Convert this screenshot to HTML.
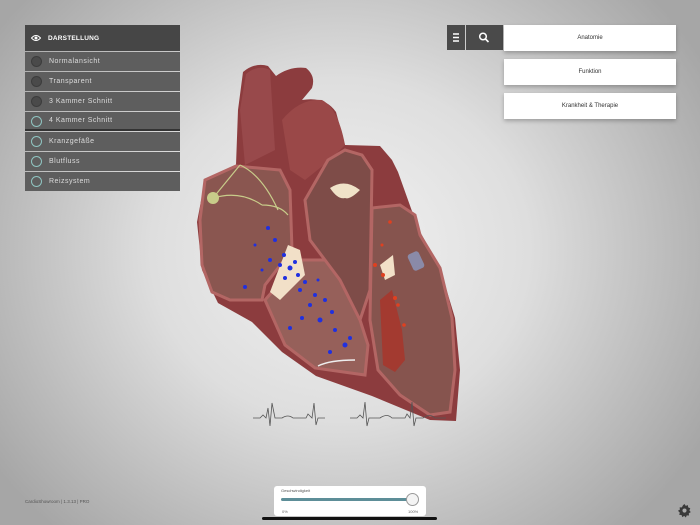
<!DOCTYPE html>
<html><head><meta charset="utf-8"><style>
*{margin:0;padding:0;box-sizing:border-box}
body{width:700px;height:525px;overflow:hidden;position:relative;font-family:"Liberation Sans",sans-serif;background:radial-gradient(ellipse 420px 380px at 340px 250px,#f2f2f2 0%,#dedede 45%,#bababa 80%,#a6a6a6 100%)}
.menu{position:absolute;left:25px;top:25px;width:155px}
.hd{height:26px;background:#464646;color:#fff;font-size:6.5px;font-weight:bold;display:flex;align-items:center;padding-left:23px;letter-spacing:.2px;position:relative}
.it{height:19px;margin-top:1px;background:#5e5e5e;color:#ddd;font-size:7px;display:flex;align-items:center;padding-left:24px;letter-spacing:.5px;position:relative}
.it:before{content:"";position:absolute;left:6px;top:4px;width:9px;height:9px;border-radius:50%;border:1.3px solid #3c3c3c;background:#4a4a4a}
.it.on:before{border-color:#8fc4c0;background:transparent}
.btn{position:absolute;background:#fff;font-size:6px;color:#333;display:flex;align-items:center;justify-content:center;box-shadow:0 2px 4px rgba(0,0,0,.25)}
.ib{position:absolute;top:25px;height:25px;background:#4a4a4a;color:#fff}
</style></head><body>
<div class="menu">
<div class="hd"><svg style="position:absolute;left:6px;top:9px" width="10" height="8" viewBox="0 0 10 8"><path d="M0.5 4Q5 -1 9.5 4Q5 9 0.5 4Z" fill="none" stroke="#fff" stroke-width="1"/><circle cx="5" cy="4" r="1.5" fill="#fff"/></svg>DARSTELLUNG</div>
<div class="it">Normalansicht</div>
<div class="it">Transparent</div>
<div class="it">3 Kammer Schnitt</div>
<div class="it on" style="border-bottom:2px solid #333">4 Kammer Schnitt</div>
<div class="it on">Kranzgefäße</div>
<div class="it on">Blutfluss</div>
<div class="it on">Reizsystem</div>
</div>
<div class="ib" style="left:447px;width:18px"><svg width="18" height="25"><path d="M6 9h6M6 12.5h6M6 16h6" stroke="#fff" stroke-width="1.6"/></svg></div>
<div class="ib" style="left:466px;width:37px"><svg width="37" height="25"><circle cx="17" cy="11.5" r="3.3" fill="none" stroke="#fff" stroke-width="1.5"/><path d="M19.5 14l3 3" stroke="#fff" stroke-width="1.6"/></svg></div>
<div class="btn" style="left:504px;top:25px;width:172px;height:26px">Anatomie</div>
<div class="btn" style="left:504px;top:59px;width:172px;height:26px">Funktion</div>
<div class="btn" style="left:504px;top:93px;width:172px;height:26px">Krankheit &amp; Therapie</div>

<svg style="position:absolute;left:0;top:0" width="700" height="525">
<path d="M243 72 Q255 62 268 66 L276 76 Q290 66 306 68 Q316 76 312 88 L302 100 Q325 96 336 112 L345 145 L380 146 L392 160 L398 172 L408 200 L418 228 L440 268 L455 318 L460 370 L456 421 L430 420 L372 396 L316 376 L282 352 L252 322 L218 303 L202 270 L197 222 L205 180 L236 165 L238 110 Z" fill="#8c3c3e"/>
<path d="M282 120 Q300 98 322 100 Q338 108 345 145 L330 160 L305 180 L290 170 Z" fill="#9a4848"/>
<path d="M246 74 Q258 64 270 70 L275 150 L245 165 L240 110 Z" fill="#98494b"/>
<path d="M205 180 L236 166 L280 170 L290 190 L292 250 L265 285 L262 300 L230 300 L212 292 L202 265 L200 220 Z" fill="#8a5650" stroke="#b36664" stroke-width="3"/>
<path d="M265 300 L300 260 L330 260 L345 290 L360 320 L368 345 L365 375 L315 368 L285 345 Z" fill="#96605a" stroke="#b36664" stroke-width="3"/>
<path d="M328 160 L345 150 L362 155 L372 170 L370 290 L360 320 L340 280 L310 240 L305 200 Z" fill="#7e4c48" stroke="#b36664" stroke-width="3"/>
<path d="M372 208 L400 205 L415 215 L420 235 L440 268 L452 318 L455 370 L450 412 L430 415 L400 395 L378 370 L370 320 Z" fill="#86544e" stroke="#b36664" stroke-width="3"/>
<path d="M380 300 L392 290 L402 330 L405 360 L395 372 L383 365 Z" fill="#a33a30"/>
<path d="M330 188 Q345 178 360 190 Q350 200 345 198 Q338 200 330 188Z" fill="#f0e2c8"/>
<path d="M288 245 L300 250 L305 275 L280 300 L270 292 Z" fill="#f2e0c8"/>
<path d="M380 265 L393 255 L395 275 L385 280 Z" fill="#f2e0c8"/>
<circle cx="213" cy="198" r="6" fill="#c8cc8a"/>
<path d="M213 198 Q240 190 262 205 M213 198 L240 165 M240 165 Q262 175 278 210 M262 205 Q280 205 288 215" stroke="#c8cc8a" stroke-width="1.2" fill="none"/>
<rect x="410" y="252" width="12" height="18" rx="3" fill="#8a8aa8" transform="rotate(-25 416 261)"/>
<g fill="#2030e0">
<circle cx="268" cy="228" r="2"/><circle cx="275" cy="240" r="2"/><circle cx="284" cy="255" r="2"/><circle cx="270" cy="260" r="2"/><circle cx="290" cy="268" r="2.5"/><circle cx="298" cy="275" r="2"/><circle cx="285" cy="278" r="2"/><circle cx="305" cy="282" r="2"/><circle cx="245" cy="287" r="2"/><circle cx="300" cy="290" r="2"/><circle cx="315" cy="295" r="2"/><circle cx="310" cy="305" r="2"/><circle cx="325" cy="300" r="2"/><circle cx="302" cy="318" r="2"/><circle cx="290" cy="328" r="2"/><circle cx="320" cy="320" r="2.5"/><circle cx="335" cy="330" r="2"/><circle cx="345" cy="345" r="2.5"/><circle cx="330" cy="352" r="2"/><circle cx="350" cy="338" r="2"/><circle cx="332" cy="312" r="2"/><circle cx="255" cy="245" r="1.5"/><circle cx="262" cy="270" r="1.5"/><circle cx="280" cy="265" r="2"/><circle cx="295" cy="262" r="2"/><circle cx="318" cy="280" r="1.5"/>
</g>
<g fill="#e04020">
<circle cx="390" cy="222" r="1.8"/><circle cx="375" cy="265" r="2"/><circle cx="383" cy="275" r="2"/><circle cx="395" cy="298" r="2"/><circle cx="398" cy="305" r="1.8"/><circle cx="404" cy="325" r="1.8"/><circle cx="382" cy="245" r="1.5"/>
</g>
<path d="M318 366 Q330 360 355 360" stroke="#eee" stroke-width="1.5" fill="none"/>
<g stroke="#555" stroke-width="0.8" fill="none">
<path d="M253 418 L260 418 L263 415 L266 418 L268 408 L270 426 L272 403 L275 418 L282 418 Q288 414 293 418 L306 418 L308 414 L312 418 L314 403 L316 425 L318 418 L325 418"/>
<path d="M350 418 L357 418 L360 415 L363 418 L365 402 L367 426 L369 418 L380 418 Q387 413 392 418 L405 418 L407 414 L410 418 L412 402 L414 426 L416 418 L423 418 Q430 413 435 418 L446 418"/>
</g>
</svg>

<div style="position:absolute;left:25px;top:499px;font-size:4.5px;color:#555">CardioShowroom | 1.3.13 | PRO</div>
<div style="position:absolute;left:274px;top:486px;width:152px;height:30px;background:#fff;border-radius:3px">
<div style="position:absolute;left:7px;top:2px;font-size:4px;color:#555">Geschwindigkeit</div>
<div style="position:absolute;left:7px;top:12px;width:135px;height:3px;background:#5d8e98;border-radius:2px"></div>
<div style="position:absolute;left:132px;top:7px;width:13px;height:13px;border-radius:50%;background:#f4f4f4;border:1px solid #999"></div>
<div style="position:absolute;left:8px;top:23px;font-size:4px;color:#666">0%</div>
<div style="position:absolute;left:134px;top:23px;font-size:4px;color:#666">100%</div>
</div>
<div style="position:absolute;left:262px;top:517px;width:175px;height:3px;background:#111;border-radius:2px"></div>
<svg style="position:absolute;left:677px;top:503px" width="15" height="15" viewBox="0 0 16 16"><path d="M8 1l1.3 2 2.3-.7.3 2.4 2.3.9-1 2.2 1.5 1.9-2.1 1.2.2 2.4-2.4-.1-1 2.2-1.7-1.7-2 1.4-.9-2.3-2.4-.2.6-2.3L1 8.2l2.1-1.2-.3-2.4 2.4.1L6.4 2.4z" fill="#3a3a3a"/><circle cx="8" cy="8" r="2.2" fill="#aaa"/></svg>
</body></html>
